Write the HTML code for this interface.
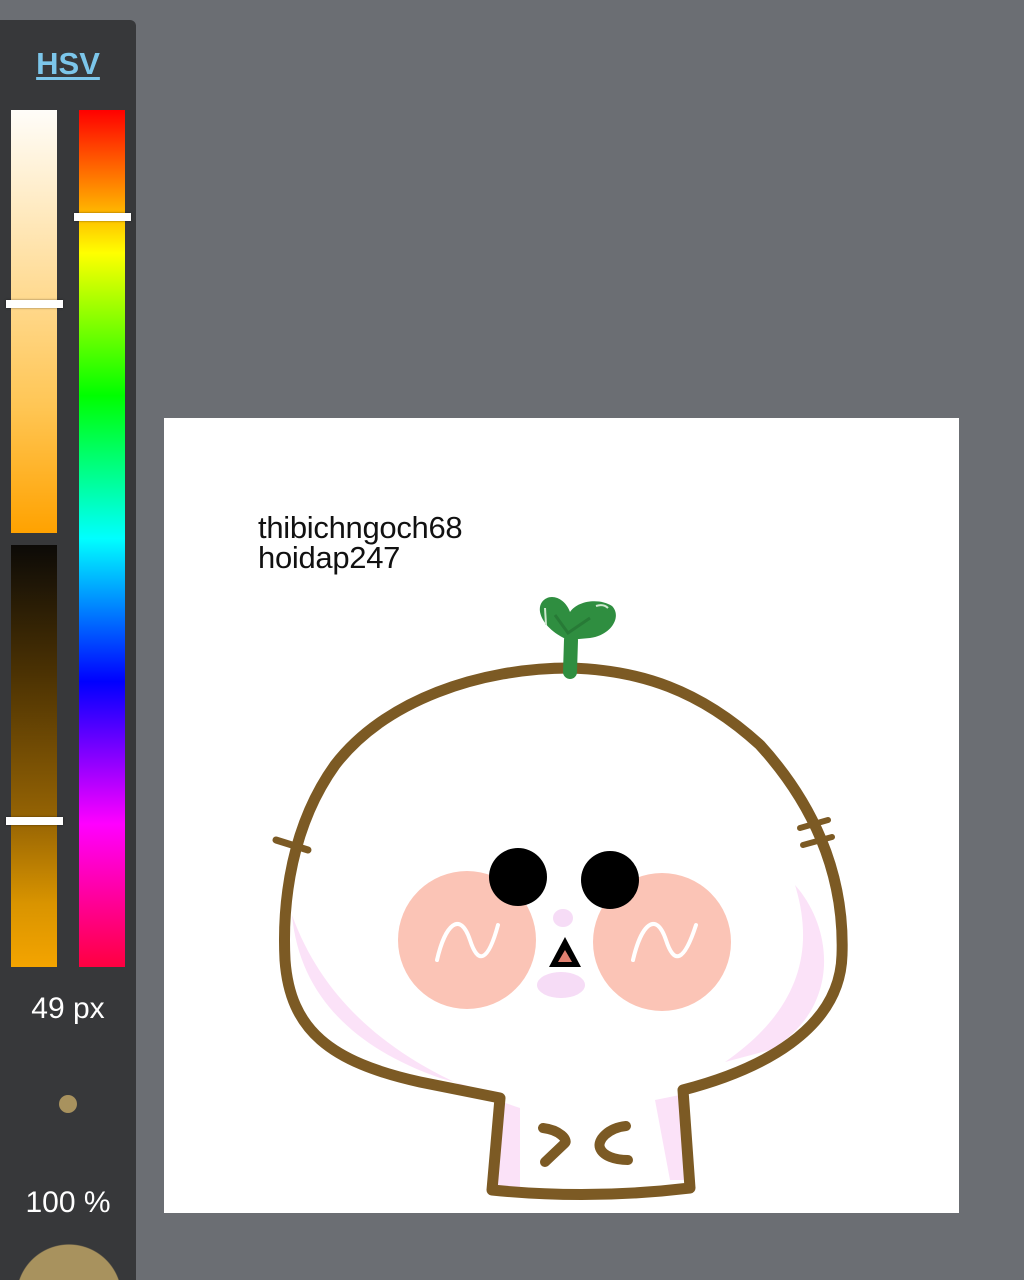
<!DOCTYPE html>
<html><head><meta charset="utf-8"><style>
html,body{margin:0;padding:0;width:1024px;height:1280px;overflow:hidden;}
body{background:#6b6e73;position:relative;font-family:"Liberation Sans",sans-serif;}
.panel{position:absolute;left:0;top:20px;width:136px;height:1260px;background:#37383a;border-top-right-radius:6px;}
.hsv{position:absolute;left:0;width:136px;top:46px;text-align:center;color:#7cc6ea;font-weight:bold;font-size:31px;text-decoration:underline;text-underline-offset:3px;}
.bar{position:absolute;}
.knob{position:absolute;height:8px;background:#fff;box-shadow:0 0 2px rgba(0,0,0,.5);}
.lbl{position:absolute;left:0;width:136px;text-align:center;color:#fff;font-size:30px;}
.canvas{position:absolute;left:164px;top:418px;width:795px;height:795px;background:#fff;}
.txt{position:absolute;left:258px;top:513px;font-size:31px;line-height:30px;color:#111;letter-spacing:-0.3px;}
</style></head><body>
<div class="panel"></div>
<div style="position:absolute;left:16px;top:1244px;width:106px;height:36px;background:radial-gradient(circle 53px at 53px 53px,#a8925e 52px,rgba(168,146,94,0) 53px)"></div>
<div class="hsv">HSV</div>
<div class="bar" style="left:11px;top:110px;width:46px;height:423px;background:linear-gradient(#fffdf9,#ffd98e 45%,#ffc655 70%,#ffa200)"></div>
<div class="bar" style="left:11px;top:545px;width:46px;height:422px;background:linear-gradient(#0c0a07,#4a3103 30%,#966404 65%,#d99400 85%,#f4a400)"></div>
<div class="bar" style="left:79px;top:110px;width:46px;height:857px;background:linear-gradient(#ff0000,#ffff00 16.7%,#00ff00 33.3%,#00ffff 50%,#0000ff 66.7%,#ff00ff 83.3%,#ff0040)"></div>
<div class="knob" style="left:6px;top:300px;width:57px;"></div>
<div class="knob" style="left:6px;top:817px;width:57px;"></div>
<div class="knob" style="left:74px;top:213px;width:57px;"></div>
<div class="lbl" style="top:992px">49 px</div>
<div style="position:absolute;left:59px;top:1095px;width:18px;height:18px;border-radius:50%;background:#a8925e"></div>
<div class="lbl" style="top:1186px">100 %</div>
<div class="canvas"></div>
<div class="txt">thibichngoch68<br>hoidap247</div>
<svg width="1024" height="1280" style="position:absolute;left:0;top:0">
<path d="M292,915 C300,1000 360,1050 440,1078 L500,1095 L495,1185 L520,1190 L520,1108 C420,1075 330,1020 292,915 Z" fill="#fbe2f8"/>
<path d="M795,885 C835,930 840,1010 770,1050 L725,1062 C800,1010 815,950 795,885 Z" fill="#fbe2f8"/>
<path d="M655,1100 L670,1180 L685,1180 L680,1095 Z" fill="#fbe2f8"/>
<path d="M500,1098 L492,1190 Q590,1200 690,1188 L683,1090 C760,1070 840,1030 842,955 C845,870 810,800 760,745 C700,690 640,670 570,668 C480,668 385,700 335,765 C292,825 282,900 285,960 C290,1030 330,1062 420,1082 Z" fill="none" stroke="#7c5a24" stroke-width="11" stroke-linejoin="round"/>
<line x1="276" y1="840" x2="308" y2="850" stroke="#7c5a24" stroke-width="7" stroke-linecap="round"/>
<line x1="800" y1="828" x2="828" y2="820" stroke="#7c5a24" stroke-width="6" stroke-linecap="round"/>
<line x1="803" y1="845" x2="832" y2="837" stroke="#7c5a24" stroke-width="6" stroke-linecap="round"/>
<circle cx="467" cy="940" r="69" fill="#fbc4b6"/>
<circle cx="662" cy="942" r="69" fill="#fbc4b6"/>
<ellipse cx="563" cy="918" rx="10" ry="9" fill="#f6dcf6"/>
<ellipse cx="561" cy="985" rx="24" ry="13" fill="#f6dcf6"/>
<circle cx="518" cy="877" r="29" fill="#000"/>
<circle cx="610" cy="880" r="29" fill="#000"/>
<path d="M437,960 C445,925 460,910 470,940 C478,965 488,962 498,925" fill="none" stroke="#fff" stroke-width="4" stroke-linecap="round"/>
<path d="M633,960 C641,925 656,910 666,940 C674,965 684,962 696,925" fill="none" stroke="#fff" stroke-width="4" stroke-linecap="round"/>
<path d="M565,937 L549,967 L581,967 Z" fill="#000"/>
<path d="M565,950 L558,962 L572,962 Z" fill="#e08070"/>
<path d="M543,1128 C560,1130 568,1140 565,1143 L545,1162" fill="none" stroke="#7c5a24" stroke-width="10" stroke-linecap="round"/>
<path d="M626,1126 C608,1128 597,1140 600,1148 C603,1156 615,1160 628,1160" fill="none" stroke="#7c5a24" stroke-width="10" stroke-linecap="round"/>
<path d="M570,672 L571,640" stroke="#2f8e40" stroke-width="14" stroke-linecap="round"/>
<path d="M568,640 C545,630 535,612 542,602 C550,592 565,598 570,612 C578,600 600,598 612,606 C622,616 612,635 590,638 Z" fill="#2f8e40"/>
<path d="M555,615 L568,633 L590,618" fill="none" stroke="#277a36" stroke-width="3"/>
<path d="M545,608 L546,625" stroke="#cfe8cf" stroke-width="2"/>
<path d="M596,606 C602,604 606,606 608,608" fill="none" stroke="#cfe8cf" stroke-width="2"/>
</svg>
</body></html>
